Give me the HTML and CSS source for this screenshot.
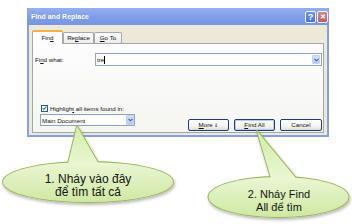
FILE: index.html
```html
<!DOCTYPE html>
<html>
<head>
<meta charset="utf-8">
<link rel="stylesheet" href="styles.css">
</head>
<body>
<div class="stage">
  <div class="dialog">
    <div class="titlebar">
      <span class="title">Find and Replace</span>
      <div class="tbtns">
        <span class="tbtn help">?</span>
        <span class="tbtn close">✕</span>
      </div>
    </div>
    <div class="dbody">
      <div class="tabs">
        <span class="tab active w-find">Fin<u>d</u></span>
        <span class="tab w-replace">Re<u>p</u>lace</span>
        <span class="tab w-goto"><u>G</u>o To</span>
      </div>
      <div class="panel">
        <div class="findrow">
          <span class="label">Fi<u>n</u>d what:</span>
          <div class="input">
            <span class="val">tre</span><span class="caret"></span>
            <span class="dd"><svg width="5" height="4" viewBox="0 0 5 4"><path d="M0.5 0.8 L2.5 2.8 L4.5 0.8" fill="none" stroke="#4d6185" stroke-width="1.1"/></svg></span>
          </div>
        </div>
        <div class="lower">
          <div class="leftcol">
            <div class="check">
              <span class="box"><svg width="6" height="6" viewBox="0 0 6 6"><path d="M0.8 3 L2.3 4.6 L5.2 1.2" fill="none" stroke="#21a121" stroke-width="1.3"/></svg></span>
              <span>Highligh<u>t</u> all items found in:</span>
            </div>
            <div class="select">
              <span>Main Document</span>
              <span class="dd"><svg width="5" height="4" viewBox="0 0 5 4"><path d="M0.5 0.8 L2.5 2.8 L4.5 0.8" fill="none" stroke="#4d6185" stroke-width="1.1"/></svg></span>
            </div>
          </div>
          <div class="buttons">
            <span class="btn w-more"><u>M</u>ore <span class="arr">⇓</span></span>
            <span class="btn w-findall default"><u>F</u>ind All</span>
            <span class="btn w-cancel">Cancel</span>
          </div>
        </div>
      </div>
    </div>
  </div>

  <svg class="callouts" width="352" height="224" viewBox="0 0 352 224">
    <defs>
      <linearGradient id="g1" gradientUnits="userSpaceOnUse" x1="0" y1="126" x2="0" y2="202">
        <stop offset="0" stop-color="#d3ecaa"/>
        <stop offset="0.5" stop-color="#e9f6d2"/>
        <stop offset="1" stop-color="#cfe8a2"/>
      </linearGradient>
      <linearGradient id="g2" gradientUnits="userSpaceOnUse" x1="0" y1="131" x2="0" y2="217">
        <stop offset="0" stop-color="#d3ecaa"/>
        <stop offset="0.55" stop-color="#e9f6d2"/>
        <stop offset="1" stop-color="#cfe8a2"/>
      </linearGradient>
      <filter id="sh" x="-10%" y="-10%" width="120%" height="130%">
        <feDropShadow dx="1" dy="2" stdDeviation="1.5" flood-color="#000" flood-opacity="0.28"/>
      </filter>
    </defs>
    <g filter="url(#sh)">
      <g stroke="#98b85a" stroke-width="2">
        <ellipse cx="88" cy="182" rx="85" ry="20" fill="none"/>
        <path d="M77 126 L67 168 L101 168 Z" fill="none" stroke-linejoin="round"/>
      </g>
      <g fill="url(#g1)">
        <ellipse cx="88" cy="182" rx="85" ry="20"/>
        <path d="M77 126 L67 168 L101 168 Z"/>
      </g>
    </g>
    <g filter="url(#sh)">
      <g stroke="#98b85a" stroke-width="2">
        <ellipse cx="278.5" cy="197" rx="70" ry="20" fill="none"/>
        <path d="M257 131 L273 185 L300 183 Z" fill="none" stroke-linejoin="round"/>
      </g>
      <g fill="url(#g2)">
        <ellipse cx="278.5" cy="197" rx="70" ry="20"/>
        <path d="M257 131 L273 185 L300 183 Z"/>
      </g>
    </g>
    <text class="ctext c1" x="88" y="183" text-anchor="middle">1. Nháy vào đây</text>
    <text class="ctext c1" x="88" y="196" text-anchor="middle">để tìm tất cả</text>
    <text class="ctext c2" x="279" y="198" text-anchor="middle">2. Nháy Find</text>
    <text class="ctext c2" x="279" y="211" text-anchor="middle">All để tìm</text>
  </svg>
</div>
</body>
</html>
```
FILE: styles.css
```css
* { box-sizing: border-box; }
html, body { margin: 0; padding: 0; background: #fff; }
body { width: 352px; height: 224px; overflow: hidden; }

.stage {
  position: relative;
  width: 352px;
  height: 224px;
  padding-top: 8px;
  padding-left: 27px;
  font-family: "Liberation Sans", Arial, sans-serif;
}

.dialog {
  width: 302px;
  height: 129px;
  border: 2px solid #84a1e6;
  border-top: none;
  background: #ece9d8;
  display: flex;
  flex-direction: column;
}

.titlebar {
  height: 17px;
  margin: 0 -2px;
  background: linear-gradient(#93b0f2, #7d9be6 60%, #7895e0);
  border-radius: 4px 4px 0 0;
  display: flex;
  align-items: flex-start;
  justify-content: space-between;
  padding: 0 1px 0 4px;
}
.title {
  color: #fff;
  font-weight: bold;
  font-size: 7px;
  line-height: 17px;
  text-shadow: 0 0 1px #6b86c9;
}
.tbtns { display: flex; gap: 1px; margin-top: 3px; }
.tbtn {
  width: 11px;
  height: 12px;
  border: 1px solid #f3f6fd;
  border-radius: 2px;
  color: #fff;
  font-weight: bold;
  font-size: 9px;
  line-height: 10px;
  text-align: center;
}
.help { background: linear-gradient(#6f95ee, #4c73d9); }
.close { background: linear-gradient(#d08a8e, #b86068); font-size: 7px; }

.dbody {
  flex: 1;
  padding: 5px 3px 2px 3px;
  display: flex;
  flex-direction: column;
}

.tabs {
  height: 13px;
  display: flex;
  align-items: flex-end;
  position: relative;
  z-index: 1;
}
.tab {
  height: 11px;
  border: 1px solid #a5aaa8;
  border-bottom: none;
  border-radius: 2px 2px 0 0;
  background: linear-gradient(#fefefe, #ececea);
  font-size: 6.2px;
  line-height: 10px;
  text-align: center;
  color: #111;
}
.tab.active {
  height: 14px;
  margin-bottom: -1px;
  background: #fcfcfe;
  border-top: 2px solid #f1b23f;
  line-height: 12px;
}
.w-find { width: 31px; }
.w-replace { width: 31px; }
.w-goto { width: 28px; }

.panel {
  height: 90px;
  background: linear-gradient(#fdfdfe, #f5f5f1);
  border: 1px solid #a3a8a6;
  padding: 9px 1px 1px 2px;
  display: flex;
  flex-direction: column;
  justify-content: space-between;
  font-size: 6.2px;
  color: #111;
}

.findrow { display: flex; align-items: center; height: 13px; }
.label { width: 60px; }
.input {
  flex: 1;
  height: 13px;
  background: #fff;
  border: 1px solid #8da6cc;
  display: flex;
  align-items: center;
  padding-left: 1px;
  position: relative;
}
.caret { width: 1px; height: 8px; background: #000; }
.input .dd { margin-left: auto; margin-right: 1px; }
.dd {
  width: 8px;
  height: 9px;
  background: linear-gradient(#d5e1fb, #b5c8f3);
  border: 1px solid #c5d3f2;
  border-radius: 1px;
  display: flex;
  align-items: center;
  justify-content: center;
}

.lower { display: flex; align-items: flex-end; justify-content: space-between; }
.leftcol { display: flex; flex-direction: column; padding-bottom: 5px; padding-left: 5px; }
.check { display: flex; align-items: center; gap: 2px; height: 8px; margin-left: 1px; margin-bottom: 2px; }
.box {
  width: 7px;
  height: 7px;
  border: 1px solid #2a5a8f;
  background: #f2f2ee;
  display: flex;
  align-items: center;
  justify-content: center;
}
.select {
  width: 95px;
  height: 12px;
  background: #fff;
  border: 1px solid #8da6cc;
  display: flex;
  align-items: center;
  justify-content: space-between;
  padding-left: 1px;
  padding-right: 0;
}
.select .dd { height: 10px; }

.buttons { display: flex; gap: 5px; }
.btn {
  height: 12px;
  border: 1px solid #1f3b7a;
  border-radius: 2px;
  background: linear-gradient(#ffffff, #f1f1ec 70%, #dcdcd3);
  font-size: 6.2px;
  line-height: 10px;
  text-align: center;
  color: #111;
}
.btn.default { box-shadow: inset 0 0 0 1px #b8cdf5; }
.w-more { width: 41px; }
.w-findall { width: 41px; }
.w-cancel { width: 42px; }
.arr { font-size: 5px; }

.callouts {
  position: absolute;
  left: 0;
  top: 0;
  pointer-events: none;
}
.ctext {
  font-family: "Liberation Sans", Arial, sans-serif;
  fill: #141414;
}
.c1 { font-size: 12px; }
.c2 { font-size: 11px; }
```
